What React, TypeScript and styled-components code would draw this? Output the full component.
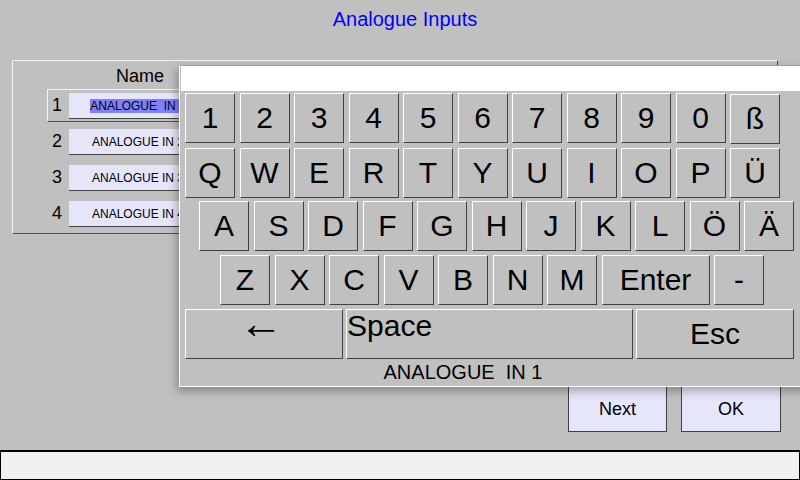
import React from "react";
import styled, { createGlobalStyle } from "styled-components";

const GlobalStyle = createGlobalStyle`
  html, body {
    margin: 0;
    padding: 0;
    background: #c0c0c0;
  }
  body {
    font-family: "Liberation Sans", Arial, sans-serif;
  }
`;

const Screen = styled.div`
  position: relative;
  width: 800px;
  height: 480px;
  overflow: hidden;
  background: #c0c0c0;
  display: flex;
  flex-direction: column;
`;

const Title = styled.div`
  height: 38px;
  line-height: 38px;
  padding-left: 10px;
  text-align: center;
  font-size: 20px;
  color: #0000ff;
`;

const Panel = styled.div`
  box-sizing: border-box;
  margin: 22px 0 0 12px;
  width: 766px;
  height: 174px;
  border: 1px solid;
  border-color: #f4f4f4 #505050 #505050 #f4f4f4;
  padding-left: 34px;
  display: flex;
  flex-direction: column;
  gap: 3px;
`;

const Header = styled.div`
  height: 25px;
  display: flex;
  align-items: flex-end;
  padding-left: 22px;
  font-size: 18px;
  line-height: 20px;
  color: #000;
`;

const HeaderCell = styled.div`
  width: 142px;
  text-align: center;
`;

const Row = styled.div<{ $active?: boolean }>`
  box-sizing: border-box;
  height: 33px;
  width: 300px;
  display: flex;
  align-items: center;
  border-left: 1px solid ${(p) => (p.$active ? "#f4f4f4" : "transparent")};
  border-top: 1px solid ${(p) => (p.$active ? "#f4f4f4" : "transparent")};
  border-bottom: 1px solid ${(p) => (p.$active ? "#505050" : "transparent")};
`;

const RowNumber = styled.div`
  width: 21px;
  padding-left: 4px;
  box-sizing: border-box;
  font-size: 18px;
  color: #000;
`;

const NameField = styled.div`
  box-sizing: border-box;
  width: 138px;
  height: 26px;
  margin-top: 1px;
  background: #e6e6fa;
  border-bottom: 1px solid #404040;
  display: flex;
  align-items: center;
  justify-content: center;
  font-size: 12px;
  color: #000;
  white-space: pre;
`;

const Selected = styled.span`
  background: #8080ff;
  line-height: 14px;
`;

const Filler = styled.div`
  flex: 1;
`;

const ButtonRow = styled.div`
  display: flex;
  justify-content: flex-end;
  gap: 14px;
  padding-right: 19px;
  margin-bottom: 18px;
`;

const DialogButton = styled.button<{ $w: number }>`
  box-sizing: border-box;
  width: ${(p) => p.$w}px;
  height: 46px;
  background: #e6e6fa;
  border: 1px solid #404040;
  font-family: "Liberation Sans", Arial, sans-serif;
  font-size: 18px;
  color: #000;
  padding: 0;
`;

const StatusBar = styled.div`
  box-sizing: border-box;
  height: 30px;
  background: #f0f0f0;
  border: 1px solid #000;
  border-top-width: 2px;
`;

/* on-screen keyboard popup, floats over the dialog */
const Keyboard = styled.div`
  position: absolute;
  left: 179px;
  top: 65px;
  width: 640px;
  height: 322px;
  box-sizing: border-box;
  background: #c0c0c0;
  border-top: 1px solid #a0a0a0;
  border-left: 1px solid #ffffff;
  border-bottom: 1px solid #ffffff;
  box-shadow: -2px 4px 9px rgba(0, 0, 0, 0.3);
  display: flex;
  flex-direction: column;
`;

const EditLine = styled.div`
  height: 25px;
  background: #ffffff;
  margin-left: 1px;
`;

const KeyGrid = styled.div`
  margin-top: 2px;
  display: flex;
  flex-direction: column;
  gap: 3.7px;
`;

const KeyRow = styled.div<{ $indent: number; $gap?: number }>`
  display: flex;
  gap: ${(p) => p.$gap ?? 4.5}px;
  padding-left: ${(p) => p.$indent}px;
`;

const Key = styled.button<{ $w?: number; $topLeft?: boolean; $nudge?: number }>`
  box-sizing: border-box;
  flex: none;
  width: ${(p) => p.$w ?? 50}px;
  height: 50px;
  margin-top: ${(p) => p.$nudge ?? 0}px;
  background: #c0c0c0;
  border: 1px solid;
  border-color: #ffffff #404040 #404040 #ffffff;
  padding: 0;
  font-family: "Liberation Sans", Arial, sans-serif;
  font-size: 30px;
  color: #000;
  display: flex;
  align-items: ${(p) => (p.$topLeft ? "flex-start" : "center")};
  justify-content: ${(p) => (p.$topLeft ? "flex-start" : "center")};
  line-height: ${(p) => (p.$topLeft ? "32px" : "normal")};
`;

const BackArrow = styled.span`
  font-family: "Liberation Sans", Arial, sans-serif;
  font-size: 44px;
  line-height: 44px;
  margin: -22px 6px 0 0;
`;

const EchoLabel = styled.div`
  flex: 1;
  display: flex;
  align-items: center;
  justify-content: center;
  width: 566px;
  font-size: 20px;
  color: #000;
  white-space: pre;
`;

const digits = ["1", "2", "3", "4", "5", "6", "7", "8", "9", "0"];
const top = ["Q", "W", "E", "R", "T", "Y", "U", "I", "O", "P", "Ü"];
const home = ["A", "S", "D", "F", "G", "H", "J", "K", "L", "Ö", "Ä"];
const bottom = ["Z", "X", "C", "V", "B", "N", "M"];

const names = ["ANALOGUE IN 2", "ANALOGUE IN 3", "ANALOGUE IN 4"];

export default function App() {
  return (
    <>
      <GlobalStyle />
      <Screen>
        <Title>Analogue Inputs</Title>
        <Panel>
          <Header>
            <HeaderCell>Name</HeaderCell>
          </Header>
          <Row $active>
            <RowNumber>1</RowNumber>
            <NameField>
              <Selected>ANALOGUE  IN 1</Selected>
            </NameField>
          </Row>
          {names.map((n, i) => (
            <Row key={n}>
              <RowNumber>{i + 2}</RowNumber>
              <NameField>{n}</NameField>
            </Row>
          ))}
        </Panel>
        <Filler />
        <ButtonRow>
          <DialogButton $w={99}>Next</DialogButton>
          <DialogButton $w={100}>OK</DialogButton>
        </ButtonRow>
        <StatusBar />

        <Keyboard>
          <EditLine />
          <KeyGrid>
            <KeyRow $indent={5}>
              {digits.map((k) => (
                <Key key={k}>{k}</Key>
              ))}
              <Key $nudge={1}>ß</Key>
            </KeyRow>
            <KeyRow $indent={5}>
              {top.map((k) => (
                <Key key={k}>{k}</Key>
              ))}
            </KeyRow>
            <KeyRow $indent={19}>
              {home.map((k) => (
                <Key key={k}>{k}</Key>
              ))}
            </KeyRow>
            <KeyRow $indent={40}>
              {bottom.map((k) => (
                <Key key={k}>{k}</Key>
              ))}
              <Key $w={108}>Enter</Key>
              <Key>-</Key>
            </KeyRow>
            <KeyRow $indent={5} $gap={3}>
              <Key $w={158}>
                <BackArrow>←</BackArrow>
              </Key>
              <Key $w={287} $topLeft>
                Space
              </Key>
              <Key $w={158}>Esc</Key>
            </KeyRow>
          </KeyGrid>
          <EchoLabel>ANALOGUE  IN 1</EchoLabel>
        </Keyboard>
      </Screen>
    </>
  );
}
